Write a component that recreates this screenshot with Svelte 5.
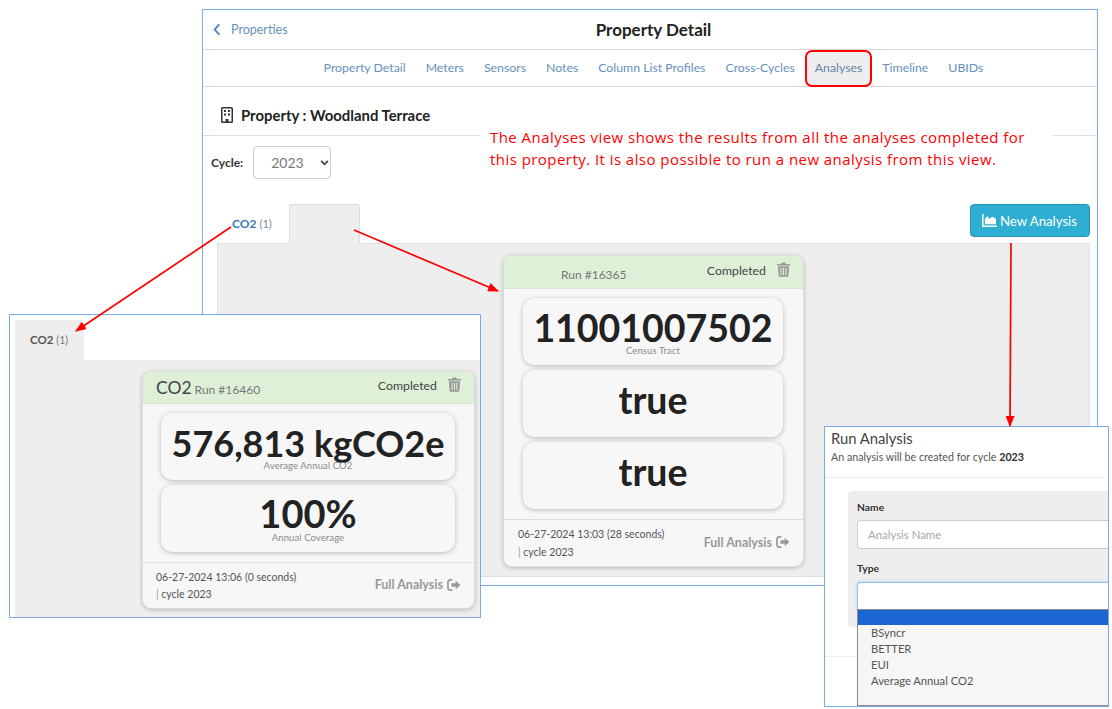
<script>
  const tabs = ['Property Detail','Meters','Sensors','Notes','Column List Profiles','Cross-Cycles','Analyses','Timeline','UBIDs'];
</script>

{#snippet trash()}
  <svg class="trash" viewBox="0 0 14 16" aria-hidden="true"><path d="M5 0.5h4l.6 1.5H14v1.600H0V2h4.400zM1 4.600h12l-.8 10.200c0 .5-.4.9-.9.9H2.700c-.5 0-.9-.4-.9-.9zM3.800 6v8h1.200V6zm2.600 0v8h1.200V6zm2.600 0v8h1.200V6z" fill-rule="evenodd"/></svg>
{/snippet}
{#snippet exit()}
  <svg class="exit" viewBox="0 0 16 14" aria-hidden="true"><path d="M6 1H3.500A2.500 2.500 0 0 0 1 3.500v7A2.500 2.500 0 0 0 3.500 13H6" fill="none" stroke="currentColor" stroke-width="2"/><path d="M5 5h5V2l5.500 5L10 12V9H5z" fill="currentColor"/></svg>
{/snippet}

<div class="canvas">
  <section class="win main">
    <header class="top">
      <a class="back"><svg viewBox="0 0 8 14" aria-hidden="true"><path d="M6.500 1.500 1.500 7l5 5.500" fill="none" stroke="currentColor" stroke-width="2"/></svg>Properties</a>
      <h1>Property Detail</h1>
    </header>
    <nav class="nav">
      {#each tabs as t}
        <a class:on={t === 'Analyses'}>{t}</a>
      {/each}
    </nav>
    <div class="prop">
      <svg viewBox="0 0 12 16" aria-hidden="true"><path fill-rule="evenodd" d="M1.500 0h9A1.500 1.500 0 0 1 12 1.500v13a1.500 1.500 0 0 1-1.500 1.500h-9A1.500 1.500 0 0 1 0 14.500v-13A1.500 1.500 0 0 1 1.500 0zm0 1.500v13h3V12h3v2.500h3v-13zM3 3h2v2H3zm4 0h2v2H7zM3 6.500h2v2H3zm4 0h2v2H7z"/></svg>
      <h2>Property : Woodland Terrace</h2>
    </div>
    <div class="cycle">
      <b>Cycle:</b>
      <span class="select">2023<svg viewBox="0 0 10 7" aria-hidden="true"><path d="M1 1l4 4 4-4" fill="none" stroke="#444" stroke-width="2"/></svg></span>
    </div>
    <div class="tabrow">
      <a class="tab-co2"><b>CO2</b> <small>(1)</small></a>
      <span class="tab-blank"></span>
      <button class="new"><svg viewBox="0 0 16 14" aria-hidden="true"><path d="M0 0h1.600v12.400H16V14H0zM3 11V5l2.500-2.500L8 5l2-1.500 1.500-.5L15 5v6z" fill="currentColor"/></svg>New Analysis</button>
    </div>
    <div class="panel"></div>
  </section>

  <article class="card center">
    <div class="head"><span class="run run-solo">Run #16365</span><span class="status">Completed</span>{@render trash()}</div>
    <div class="stats">
      <div class="stat"><strong>11001007502</strong><em>Census Tract</em></div>
      <div class="stat"><strong>true</strong></div>
      <div class="stat"><strong>true</strong></div>
    </div>
    <div class="foot">
      <div class="when">06-27-2024 13:03 (28 seconds)<br /><i>|</i> cycle 2023</div>
      <a class="full">Full Analysis {@render exit()}</a>
    </div>
  </article>

  <section class="win left">
    <div class="ltabs"><span class="ltab"><b>CO2</b> <small>(1)</small></span></div>
    <div class="lpanel">
      <article class="card small">
        <div class="head"><span class="name">CO2</span><span class="run">Run #16460</span><span class="status">Completed</span>{@render trash()}</div>
        <div class="stats">
          <div class="stat"><strong>576,813 kgCO2e</strong><em>Average Annual CO2</em></div>
          <div class="stat"><strong class="pct">100%</strong><em>Annual Coverage</em></div>
        </div>
        <div class="foot">
          <div class="when">06-27-2024 13:06 (0 seconds)<br /><i>|</i> cycle 2023</div>
          <a class="full">Full Analysis {@render exit()}</a>
        </div>
      </article>
    </div>
  </section>

  <section class="win modal">
    <div class="mhead">
      <h3>Run Analysis</h3>
      <p>An analysis will be created for cycle <b>2023</b></p>
    </div>
    <div class="mbody">
      <form class="well">
        <label for="an">Name</label>
        <input id="an" placeholder="Analysis Name" />
        <label class="lt" for="ty">Type</label>
        <div id="ty" class="field"></div>
      </form>
    </div>
    <div class="mfoot"></div>
    <ul class="drop">
      <li class="sel"></li>
      <li>BSyncr</li>
      <li>BETTER</li>
      <li>EUI</li>
      <li>Average Annual CO2</li>
    </ul>
  </section>

  <p class="note">The Analyses view shows the results from all the analyses completed for this property. It is also possible to run a new analysis from this view.</p>

  <svg class="arrows" viewBox="0 0 1112 709" aria-hidden="true">
    <defs>
      <marker id="ah" markerWidth="11" markerHeight="9" refX="10" refY="4.500" orient="auto" markerUnits="userSpaceOnUse">
        <path d="M0 0L11 4.500L0 9z" fill="#f00" />
      </marker>
    </defs>
    <path d="M231 227L76 331" marker-end="url(#ah)" />
    <path d="M354 230L498 291" marker-end="url(#ah)" />
    <path d="M1011 243L1010 426" marker-end="url(#ah)" />
  </svg>
</div>

<style>
  :global(body) { margin: 0; background: #fff; }
  .canvas { position: relative; width: 1112px; height: 709px; overflow: hidden; font-family: "Lato", "Noto Sans", sans-serif; color: #222; }
  .win { position: absolute; box-sizing: border-box; background: #fff; border: 1px solid #7fa7ea; }
  a { text-decoration: none; }

  .main { left: 202px; top: 9px; width: 896px; height: 577px; display: flex; flex-direction: column; }
  .top { height: 39px; flex: none; display: flex; align-items: center; justify-content: center; position: relative; border-bottom: 1px solid #d8d8d8; }
  .top h1 { margin: 0 0 0 7px; font-size: 17px; font-weight: 700; color: #222; }
  .back { position: absolute; left: 10px; top: 12px; display: flex; align-items: center; gap: 10px; font-size: 12.500px; color: #6690bd; }
  .back svg { width: 8px; height: 13px; color: #4b82c4; }
  .nav { height: 36px; flex: none; display: flex; justify-content: center; border-bottom: 1px solid #d8d8d8; padding-left: 7px; }
  .nav a { box-sizing: border-box; height: 37px; padding: 0 8px 3px; display: flex; align-items: center; font-size: 12.300px; color: #6690bd; border: 2px solid transparent; white-space: nowrap; }
  .nav a.on { background: #eee; border-color: #f00; border-radius: 7px; color: #6483a6; }
  .prop { height: 49px; flex: none; display: flex; align-items: center; gap: 8px; padding: 8px 0 0 18px; border-bottom: 1px solid #ddd; box-sizing: border-box; }
  .prop svg { width: 12px; height: 16px; fill: #333; }
  .prop h2 { margin: 0; font-size: 14.900px; font-weight: 700; color: #222; }
  .cycle { display: flex; align-items: center; gap: 10px; padding: 10px 0 0 8px; }
  .cycle b { font-size: 12px; color: #333; }
  .select { box-sizing: border-box; width: 78px; height: 33px; border: 1px solid #ccc; border-radius: 4px; font-size: 14px; color: #777; display: flex; align-items: center; padding-left: 17px; gap: 16px; }
  .select svg { width: 9px; height: 6px; }
  .tabrow { display: flex; align-items: flex-start; padding: 25px 7px 0 14px; height: 39px; flex: none; }
  .tab-co2 { width: 72px; height: 39px; box-sizing: border-box; padding: 12px 0 0 15px; font-size: 12px; color: #3b78b0; white-space: nowrap; }
  .tab-co2 b { font-weight: 700; }
  small { font-size: 11px; color: #7a8a99; }
  .tab-blank { width: 71px; height: 40px; background: #eee; border: 1px solid #ddd; border-bottom: 0; border-radius: 3px 3px 0 0; box-sizing: border-box; position: relative; }
  .new { margin-left: auto; width: 120px; height: 33px; box-sizing: border-box; background: #2eaed3; border: 1px solid #2591b1; border-radius: 4px; color: #fff; font: inherit; font-size: 13.200px; display: flex; align-items: center; justify-content: center; gap: 3px; padding: 0 1px 0 0; }
  .new svg { width: 15px; height: 13px; }
  .panel { margin: 0 7px 0 14px; height: 334px; background: #eee; border: 1px solid #e2e2e2; border-bottom-color: #ddd; box-sizing: border-box; flex: none; }

  .card { position: absolute; box-sizing: border-box; background: #f7f7f7; border: 1px solid #ddd; border-radius: 9px; box-shadow: 0 1px 4px rgba(0,0,0,.22); overflow: hidden; display: flex; flex-direction: column; }
  .center { left: 503px; top: 255px; width: 301px; height: 312px; }
  .head { flex: none; background: #dff0d8; border-bottom: 1px solid #d8e6d2; display: flex; align-items: center; box-sizing: border-box; }
  .center .head { height: 33px; padding: 0 13px 0 57px; }
  .run { font-size: 12px; color: #777; padding-top: 4px; }
  .status { margin-left: auto; font-size: 12.300px; color: #444; padding-bottom: 4px; }
  .trash { width: 13px; height: 15px; margin: 0 0 6px 11px; fill: #999; flex: none; }
  .stats { display: flex; flex-direction: column; gap: 5px; }
  .center .stats { padding: 9px 20px 10px 19px; }
  .stat { position: relative; background: #f7f7f7; border-radius: 12px; box-shadow: 0 1px 5px rgba(0,0,0,.25); display: flex; align-items: center; justify-content: center; height: 67px; }
  .stat strong { font-size: 37.500px; font-weight: 700; color: #222; line-height: 1; margin-top: -8px; white-space: nowrap; }
  .stat em { position: absolute; left: 0; right: 0; top: 47px; text-align: center; font-style: normal; font-size: 9.500px; letter-spacing: .1px; color: #8a8a8a; }
  .foot { flex: none; border-top: 1px solid #ddd; display: flex; align-items: center; justify-content: space-between; padding: 0 13px 1px 14px; height: 48px; box-sizing: border-box; }
  .when { font-size: 10.500px; line-height: 18px; color: #555; }
  .when i { font-style: normal; color: #99a; }
  .full { display: flex; align-items: center; gap: 4px; font-size: 12.500px; font-weight: 700; color: #999; white-space: nowrap; margin-top: -2px; }
  .exit { width: 14px; height: 12px; color: #999; }

  .left { left: 9px; top: 314px; width: 472px; height: 304px; padding: 5px 0 0 5px; display: flex; flex-direction: column; }
  .ltabs { height: 40px; flex: none; }
  .ltab { display: block; box-sizing: border-box; width: 69px; height: 40px; background: #eee; border-radius: 3px 0 0 0; padding: 13px 0 0 15px; font-size: 11.500px; color: #555; white-space: nowrap; }
  .ltab small { font-size: 10.500px; color: #777; }
  .lpanel { flex: 1; background: #eee; position: relative; }
  .small { left: 127px; top: 11px; width: 333px; height: 238px; }
  .small .head { height: 32px; padding: 0 13px; }
  .name { font-size: 17.500px; color: #444; margin-right: 3px; }
  .small .run { padding-top: 4px; }
  .small .stats { padding: 9px 19px 10px 18px; }
  .small .stat strong { font-size: 36px; margin-top: -7px; }
  .small .stat strong.pct { font-size: 38px; margin-top: -11px; }
  .small .stat em { top: 47px; }
  .small .foot { height: 47px; padding-left: 13px; }
  .small .when { line-height: 17px; }

  .modal { left: 824px; top: 426px; width: 285px; height: 281px; overflow: hidden; }
  .mhead { height: 51px; box-sizing: border-box; padding: 2px 0 0 6px; border-bottom: 1px solid #eee; }
  .mhead h3 { margin: 0; font-size: 14.800px; font-weight: 400; color: #444; }
  .mhead p { margin: 3px 0 0; font-size: 10.700px; color: #555; }
  .mhead p b { color: #333; }
  .mbody { padding: 13px 0 0 23px; }
  .well { background: #eee; border-radius: 4px 0 0 4px; padding: 9px 0 0 9px; height: 136px; box-sizing: border-box; }
  .well label { display: block; font-size: 10.300px; font-weight: 700; color: #333; line-height: 14px; }
  .well .lt { margin-top: 12px; }
  .well input { display: block; box-sizing: border-box; width: 100%; height: 29px; margin-top: 6px; padding: 0 10px; font: inherit; font-size: 11.400px; background: #fff; border: 1px solid #ccc; border-right: 0; border-radius: 4px 0 0 4px; outline: 0; }
  .well input::placeholder { color: #a8a8a8; }
  .field { box-sizing: border-box; height: 28px; margin-top: 7px; background: #fff; border: 1px solid #8fc5ea; border-right: 0; border-radius: 4px 0 0 0; box-shadow: 0 0 3px rgba(102,175,233,.5); }
  .mfoot { margin-top: 29px; border-top: 1px solid #eee; }
  .drop { position: absolute; left: 32px; top: 182px; right: 0; height: 97px; margin: 0; padding: 0; list-style: none; background: #f6f6f6; border-left: 1px solid #888; border-top: 1px solid #888; border-bottom: 1px solid #888; box-sizing: border-box; }
  .drop li { height: 16px; line-height: 16px; padding-left: 13px; font-size: 11.200px; color: #555; }
  .drop .sel { height: 15px; background: #1b66d2; }

  .note { position: absolute; left: 480px; top: 126px; width: 573px; margin: 0; box-sizing: border-box; padding: 0 10px; background: #fff; font-family: "Open Sans", sans-serif; font-size: 15px; letter-spacing: .45px; line-height: 22px; color: #f00; height: 49px; }

  .arrows { position: absolute; left: 0; top: 0; width: 1112px; height: 709px; pointer-events: none; }
  .arrows > path { stroke: #f00; stroke-width: 1.700; fill: none; }
</style>
